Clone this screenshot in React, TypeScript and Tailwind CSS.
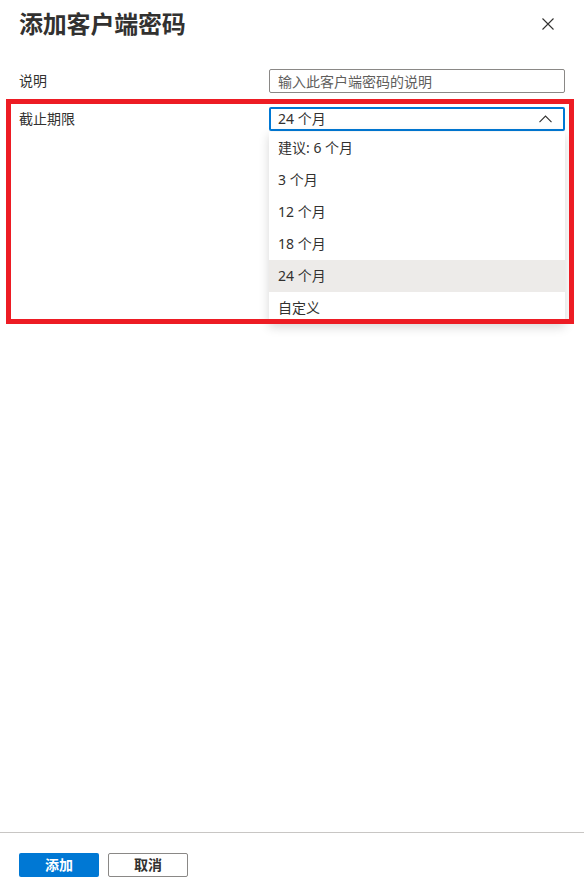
import { useState } from "react";

const options = ["建议: 6 个月", "3 个月", "12 个月", "18 个月", "24 个月", "自定义"];

function CloseIcon() {
  return (
    <svg width="12" height="12" viewBox="0 0 12 12" fill="none" stroke="#323130" strokeWidth="1.1">
      <path d="M0.5 0.5 L11.5 11.5 M11.5 0.5 L0.5 11.5" />
    </svg>
  );
}

function ChevronUp() {
  return (
    <svg width="13" height="8" viewBox="0 0 13 8" fill="none" stroke="#323130" strokeWidth="1.1">
      <path d="M0.5 7.2 L6.5 1 L12.5 7.2" />
    </svg>
  );
}

export default function App() {
  const [selected, setSelected] = useState("24 个月");

  return (
    <div
      className="relative flex h-[893px] w-full flex-col bg-white text-[#323130]"
      style={{ fontFamily: '"Noto Sans", "Noto Sans CJK SC", sans-serif' }}
    >
      <header className="flex items-start justify-between pl-[19px] pr-[30px] pt-2">
        <h1 className="text-[24px] font-bold leading-8 tracking-[-0.2px]">添加客户端密码</h1>
        <button type="button" className="mt-[10px] flex h-3 w-3 items-center justify-center">
          <CloseIcon />
        </button>
      </header>

      <main className="flex-1 px-[19px] pt-[29px]">
        <div className="flex flex-col gap-[14px]">
          <div className="flex items-center">
            <label className="w-[250px] shrink-0 text-[14px] leading-5">说明</label>
            <input
              placeholder="输入此客户端密码的说明"
              className="h-6 w-[296px] rounded-[2px] border border-[#8a8886] px-2 text-[14px] leading-5 outline-none placeholder:text-[#605e5c]"
            />
          </div>

          <div className="flex items-center">
            <label className="w-[250px] shrink-0 text-[14px] leading-5">截止期限</label>
            <div className="relative w-[296px]">
              <button
                type="button"
                className="flex h-6 w-full items-center justify-between rounded-[2px] border-2 border-[#0078d4] pl-2 pr-[11px] text-[14px] leading-5"
              >
                <span className="-ml-px">{selected}</span>
                <ChevronUp />
              </button>
              <ul className="absolute left-0 top-[25px] z-10 w-full bg-white shadow-[0_3px_10px_rgba(0,0,0,0.16)]">
                {options.map((opt) => (
                  <li
                    key={opt}
                    onClick={() => setSelected(opt)}
                    className={[
                      "flex h-8 items-center px-[9px] text-[14px] leading-5",
                      opt === selected ? "bg-[#edebe9]" : "bg-white",
                    ].join(" ")}
                  >
                    {opt}
                  </li>
                ))}
              </ul>
            </div>
          </div>
        </div>
      </main>

      <footer className="border-t border-[#c8c6c4] px-[19px] pb-4 pt-5">
        <div className="flex gap-[9px]">
          <button
            type="button"
            className="h-6 w-20 rounded-[2px] bg-[#0078d4] text-[14px] font-bold leading-5 text-white"
          >
            添加
          </button>
          <button
            type="button"
            className="h-6 w-20 rounded-[2px] border border-[#8a8886] bg-white text-[14px] font-bold leading-5 text-[#323130]"
          >
            取消
          </button>
        </div>
      </footer>

      <div className="pointer-events-none absolute left-[6px] top-[99px] z-20 h-[225px] w-[568px] border-[5px] border-[#ed1c24]" />
    </div>
  );
}
